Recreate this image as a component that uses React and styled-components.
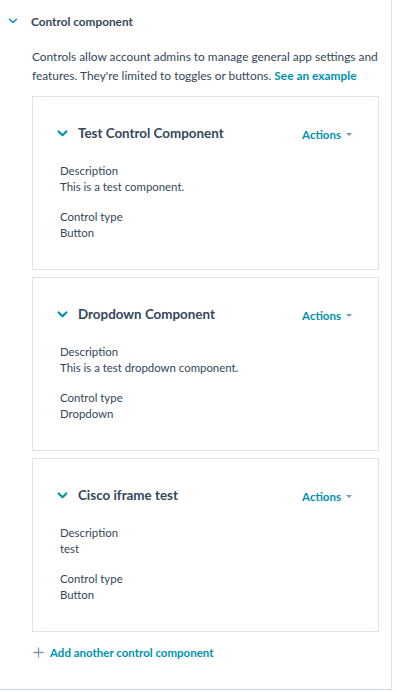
import React from "react";
import styled, { createGlobalStyle } from "styled-components";

const Global = createGlobalStyle`
  html, body { margin: 0; padding: 0; background: #fff; }
  body { font-family: "Lato", "Noto Sans", sans-serif; color: #33475b; -webkit-font-smoothing: antialiased; }
`;

const Page = styled.div`
  width: 392px;
  height: 690px;
  box-sizing: border-box;
  border-right: 1px solid #dfe3eb;
  border-bottom: 1px solid #cbd6e2;
  background: #fff;
`;

const Section = styled.section`
  padding: 11px 12px 0 8px;
`;

const SectionHeader = styled.div`
  display: flex;
  align-items: center;
  height: 20px;
  gap: 13px;
`;

const Chevron = styled.svg`
  width: ${p => p.$size || 10}px;
  height: ${p => p.$size || 10}px;
  flex: none;
`;

const SectionTitle = styled.h3`
  margin: 0;
  font-size: 11.8px;
  font-weight: 700;
  color: #33475b;
`;

const Body = styled.div`
  padding-left: 24px;
`;

const Intro = styled.p`
  margin: 16px 0 11px;
  font-size: 11.9px;
  line-height: 19px;
  color: #33475b;
`;

const Link = styled.a`
  color: #0091ae;
  font-weight: 700;
  text-decoration: none;
`;

const Cards = styled.div`
  display: flex;
  flex-direction: column;
  gap: 7px;
`;

const Card = styled.div`
  border: 1px solid #dfe3eb;
  height: 174px;
  box-sizing: border-box;
  padding: 24px 26px 0 24px;
`;

const CardHeader = styled.div`
  display: flex;
  align-items: center;
  justify-content: space-between;
  height: 24px;
`;

const CardTitleWrap = styled.div`
  display: flex;
  align-items: center;
  gap: 10px;
`;

const CardTitle = styled.h4`
  margin: 0;
  font-size: 13.4px;
  font-weight: 700;
  color: #33475b;
`;

const ActionsButton = styled.button`
  border: 0;
  background: none;
  padding: 0;
  margin-top: 3px;
  display: flex;
  align-items: center;
  gap: 5px;
  font-family: inherit;
  font-size: 11.5px;
  font-weight: 700;
  color: #0091ae;
  cursor: pointer;
`;

const Caret = styled.span`
  width: 0;
  height: 0;
  border-left: 3.5px solid transparent;
  border-right: 3.5px solid transparent;
  border-top: 3.5px solid #7c98b6;
`;

const Fields = styled.div`
  padding: 18px 0 0 3px;
  display: flex;
  flex-direction: column;
  gap: 14px;
`;

const Field = styled.div`
  display: flex;
  flex-direction: column;
  font-size: 11.4px;
  line-height: 16px;
  color: #33475b;
`;

const AddRow = styled.button`
  margin-top: 14px;
  border: 0;
  background: none;
  padding: 0 0 0 1px;
  display: flex;
  align-items: center;
  gap: 6px;
  font-family: inherit;
  font-size: 11.5px;
  font-weight: 700;
  color: #0091ae;
  cursor: pointer;
`;

const ChevronIcon = ({ size, sw }) => (
  <Chevron $size={size} viewBox="0 0 10 10">
    <path d="M1.5 3.2 L5 6.6 L8.5 3.2" fill="none" stroke="#0091ae" strokeWidth={sw || 1.6} strokeLinecap="round" strokeLinejoin="round" />
  </Chevron>
);

const items = [
  { title: "Test Control Component", desc: "This is a test component.", type: "Button" },
  { title: "Dropdown Component", desc: "This is a test dropdown component.", type: "Dropdown" },
  { title: "Cisco iframe test", desc: "test", type: "Button" },
];

export default function App() {
  return (
    <>
      <Global />
      <Page>
        <Section>
          <SectionHeader>
            <ChevronIcon size={10} sw={1.4} />
            <SectionTitle>Control component</SectionTitle>
          </SectionHeader>
          <Body>
            <Intro>
              Controls allow account admins to manage general app settings and features. They're limited to toggles or buttons. <Link href="#">See an example</Link>
            </Intro>
            <Cards>
              {items.map(it => (
                <Card key={it.title}>
                  <CardHeader>
                    <CardTitleWrap>
                      <ChevronIcon size={11} sw={2} />
                      <CardTitle>{it.title}</CardTitle>
                    </CardTitleWrap>
                    <ActionsButton>
                      Actions <Caret />
                    </ActionsButton>
                  </CardHeader>
                  <Fields>
                    <Field>
                      <span>Description</span>
                      <span>{it.desc}</span>
                    </Field>
                    <Field>
                      <span>Control type</span>
                      <span>{it.type}</span>
                    </Field>
                  </Fields>
                </Card>
              ))}
            </Cards>
            <AddRow>
              <svg width="11" height="11" viewBox="0 0 11 11">
                <path d="M5.5 0.5 V10.5 M0.5 5.5 H10.5" stroke="#7c98b6" strokeWidth="1.3" />
              </svg>
              Add another control component
            </AddRow>
          </Body>
        </Section>
      </Page>
    </>
  );
}
